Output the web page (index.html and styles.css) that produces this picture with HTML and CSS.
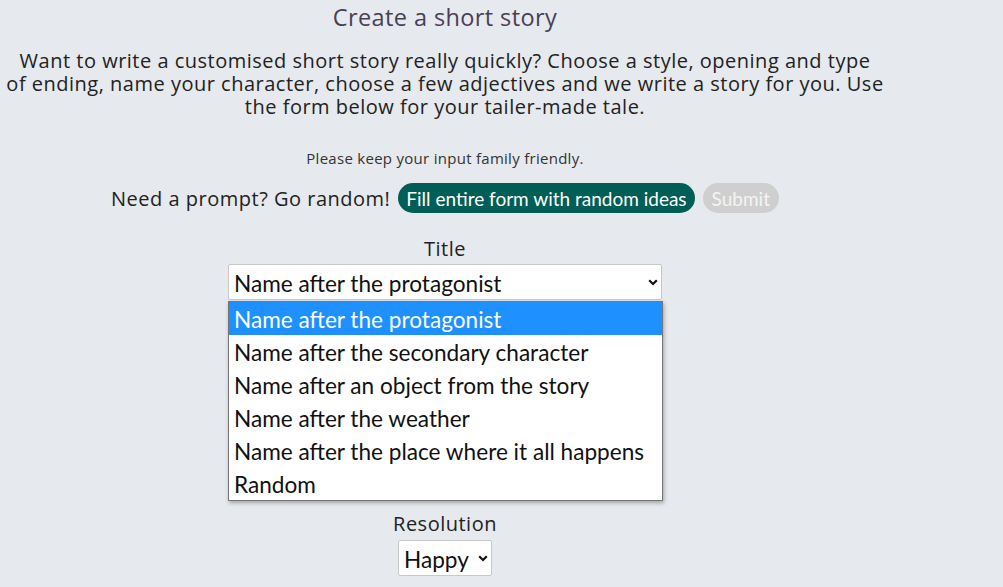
FILE: index.html
```html
<!DOCTYPE html>
<html lang="en">
<head>
<meta charset="utf-8">
<title>Create a short story</title>
<link rel="stylesheet" href="styles.css">
</head>
<body>
<main class="page">
  <h1 class="page-title">Create a short story</h1>
  <p class="intro">Want to write a customised short story really quickly? Choose a style, opening and type<br>of ending, name your character, choose a few adjectives and we write a story for you. Use<br>the form below for your tailer-made tale.</p>
  <p class="note">Please keep your input family friendly.</p>
  <div class="prompt-row">
    <span class="prompt-text">Need a prompt? Go random!</span>
    <button class="btn btn-random" type="button">Fill entire form with random ideas</button>
    <button class="btn btn-submit" type="button">Submit</button>
  </div>

  <div class="field field-title">
    <div class="field-label">Title</div>
    <div class="select-wrap">
      <div class="select select-wide">
        <span class="select-value">Name after the protagonist</span>
        <svg class="chev" width="10" height="7" viewBox="0 0 10 7"><path d="M1.2 1.2 L5 5 L8.8 1.2" fill="none" stroke="#111" stroke-width="2.2"/></svg>
      </div>
      <ul class="listbox">
        <li class="opt opt-active">Name after the protagonist</li>
        <li class="opt">Name after the secondary character</li>
        <li class="opt">Name after an object from the story</li>
        <li class="opt">Name after the weather</li>
        <li class="opt">Name after the place where it all happens</li>
        <li class="opt">Random</li>
      </ul>
    </div>
  </div>

  <div class="field field-resolution">
    <div class="field-label">Resolution</div>
    <div class="select select-small">
      <span class="select-value">Happy</span>
      <svg class="chev" width="10" height="7" viewBox="0 0 10 7"><path d="M1.2 1.2 L5 5 L8.8 1.2" fill="none" stroke="#111" stroke-width="2.2"/></svg>
    </div>
  </div>
</main>
</body>
</html>
```

FILE: styles.css
```css
* { box-sizing: border-box; }
html, body { margin: 0; padding: 0; }
body {
  background: #e6e9ed;
  font-family: "Open Sans", "Lato", sans-serif;
  color: #222;
  width: 1003px;
  height: 587px;
  overflow: hidden;
}
.page {
  width: 890px;
  text-align: center;
  display: flex;
  flex-direction: column;
  align-items: center;
}
.page-title {
  margin: 2px 0 0;
  font-size: 23.5px;
  line-height: 30px;
  font-weight: 400;
  letter-spacing: 0.4px;
  color: #4a3f55;
}
.intro {
  margin: 17px 0 0;
  font-size: 20px;
  line-height: 23px;
  letter-spacing: 0.5px;
  white-space: nowrap;
  color: #222;
}
.note {
  margin: 31px 0 0;
  font-size: 15px;
  line-height: 18px;
  letter-spacing: 0.28px;
  color: #333;
}
.prompt-row {
  margin-top: 16px;
  display: flex;
  align-items: center;
  gap: 8px;
  height: 30px;
}
.prompt-text {
  font-size: 20px;
  letter-spacing: 0.5px;
  color: #222;
}
.btn {
  border: none;
  height: 30px;
  border-radius: 15px;
  padding: 0 8px;
  font-family: "Lato", "Open Sans", sans-serif;
  font-size: 19px;
  color: #fff;
}
.btn-random { background: #005e56; }
.btn-submit { background: #cfcfcf; color: #f4f4f4; padding: 0 9px; }
.field {
  display: flex;
  flex-direction: column;
  align-items: center;
}
.field-title { margin-top: 25px; }
.field-label {
  font-size: 20px;
  line-height: 22px;
  letter-spacing: 0.5px;
  color: #222;
}
.select-wrap {
  position: relative;
  margin-top: 4px;
}
.select {
  display: flex;
  align-items: center;
  justify-content: space-between;
  height: 36px;
  background: #fff;
  border: 1px solid #c8c8c8;
  border-radius: 2px;
  padding: 2px 3px 0 5px;
  font-family: "Lato", "Open Sans", sans-serif;
  font-size: 22.6px;
  color: #111;
}
.select-wide { width: 434px; }
.select-small { width: 94px; margin-top: 5px; }
.chev { flex: none; margin-top: -2px; }
.listbox {
  position: absolute;
  top: 37px;
  left: 0;
  width: 435px;
  margin: 0;
  padding: 0;
  list-style: none;
  background: #fff;
  border: 1px solid #767676;
  box-shadow: 1px 2px 4px rgba(0,0,0,0.3);
  text-align: left;
  z-index: 2;
}
.opt {
  height: 33px;
  line-height: 35px;
  padding-left: 5px;
  font-family: "Lato", "Open Sans", sans-serif;
  font-size: 22.6px;
  color: #111;
  white-space: nowrap;
}
.opt-active { background: #1e90ff; color: #fff; }
.field-resolution { margin-top: 213px; }
```
